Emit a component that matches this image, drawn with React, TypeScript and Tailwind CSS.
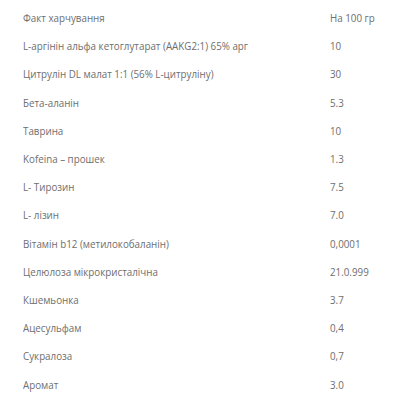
import React from "react";

type Row = { name: string; value: string };

const rows: Row[] = [
  { name: "Факт харчування", value: "На 100 гр" },
  { name: "L-аргінін альфа кетоглутарат (AAKG2:1) 65% арг", value: "10" },
  { name: "Цитрулін DL малат 1:1 (56% L-цитруліну)", value: "30" },
  { name: "Бета-аланін", value: "5.3" },
  { name: "Таврина", value: "10" },
  { name: "Kofeina – прошек", value: "1.3" },
  { name: "L- Тирозин", value: "7.5" },
  { name: "L- лізин", value: "7.0" },
  { name: "Вітамін b12 (метилокобаланін)", value: "0,0001" },
  { name: "Целюлоза мікрокристалічна", value: "21.0.999" },
  { name: "Кшемьонка", value: "3.7" },
  { name: "Ацесульфам", value: "0,4" },
  { name: "Сукралоза", value: "0,7" },
  { name: "Аромат", value: "3.0" },
];

export default function App() {
  return (
    <div className="w-[400px] h-[400px] bg-white overflow-hidden font-['Open_Sans',sans-serif] text-[11px] text-[#6e6e6e]">
      <div className="flex flex-col pt-[4px]">
        {rows.map((row) => (
          <div key={row.name} className="flex h-[28.23px] items-center">
            <div className="w-[330px] pl-[23px]">
              <span className="inline-block whitespace-nowrap origin-left scale-x-[0.89]">{row.name}</span>
            </div>
            <span className="inline-block whitespace-nowrap origin-left scale-x-[0.89]">{row.value}</span>
          </div>
        ))}
      </div>
    </div>
  );
}
